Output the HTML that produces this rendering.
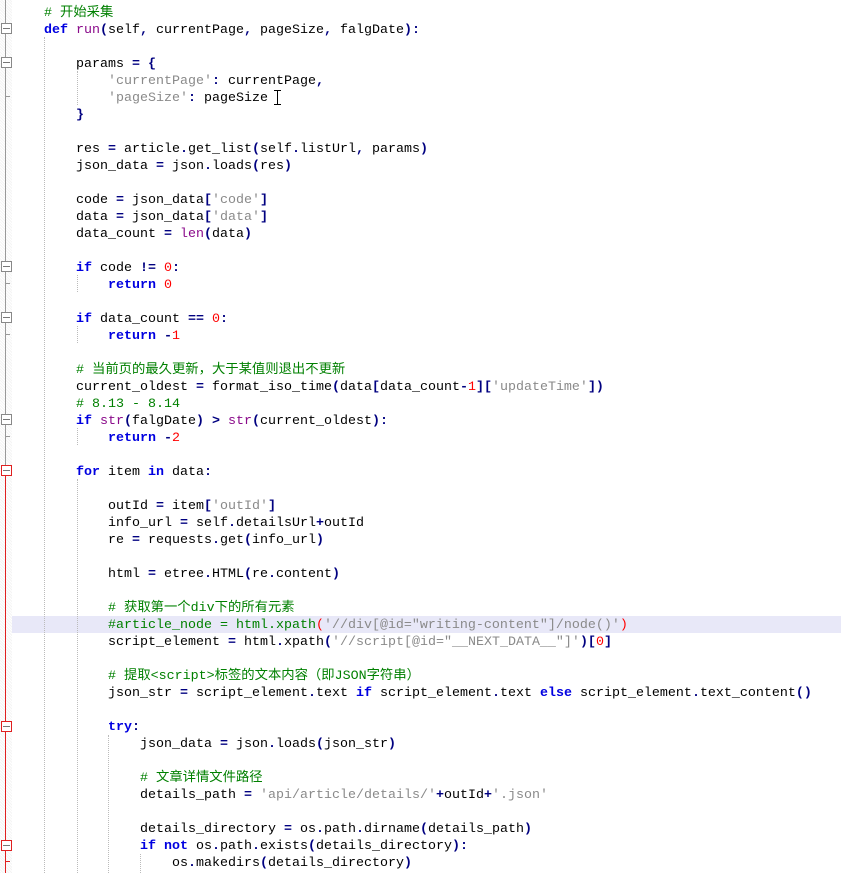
<!DOCTYPE html>
<html><head><meta charset="utf-8"><style>
html,body{margin:0;padding:0;background:#fff;width:841px;height:873px;overflow:hidden;position:relative}
.g{position:absolute;left:0;top:0;width:12px;height:873px;background:repeating-linear-gradient(45deg,#f4f4f4 0 1px,#fff 1px 2px)}
.vl{position:absolute;left:5px;width:1px;background:#999}
.vr{position:absolute;left:5px;width:1px;background:#e02020}
.bx{position:absolute;left:1px;width:9px;height:9px;border:1px solid #888;background:#fff}
.bx:after{content:"";position:absolute;left:1px;right:1px;top:4px;height:1px;background:#777}
.bx.r{border-color:#e02020}
.tk{position:absolute;left:5px;width:5px;height:1px;background:#999}
.tk.r{background:#e02020}
.dg{position:absolute;width:0;border-left:1px dotted #bbb}
.hl{position:absolute;left:12px;right:0;top:616px;height:17px;background:#e8e8f8}
.w{position:absolute;left:0;top:2px;width:841px;height:873px}
.l{position:absolute;left:0;height:17px;line-height:17px;white-space:pre;font-family:"Liberation Mono","Noto Sans CJK SC",monospace;font-size:13.33px;color:#000}
.k{color:#0000e0;font-weight:bold}
.f{color:#8a0a8a}
.n{color:#ff0000}
.s{color:#8a8a8a}
.c{color:#008000}
.o{color:#000080;font-weight:bold}
.cur{position:absolute;left:277px;top:90px;width:1px;height:15px;background:#000}
.cur:before,.cur:after{content:"";position:absolute;left:-3px;width:7px;height:1px;background:#000}
.cur:before{top:0}.cur:after{bottom:0}
</style></head><body>
<div class="g"></div>
<div class="hl"></div>
<div class="vl" style="top:0;height:470px"></div>
<div class="vr" style="top:470px;height:403px"></div>
<div class="bx" style="top:23px"></div>
<div class="bx" style="top:57px"></div>
<div class="tk" style="top:96px"></div>
<div class="bx" style="top:261px"></div>
<div class="tk" style="top:283px"></div>
<div class="bx" style="top:312px"></div>
<div class="tk" style="top:334px"></div>
<div class="bx" style="top:414px"></div>
<div class="tk" style="top:436px"></div>
<div class="bx r" style="top:465px"></div>
<div class="bx r" style="top:721px"></div>
<div class="bx r" style="top:840px"></div>
<div class="tk r" style="top:861px"></div>
<div class="dg" style="left:44px;top:37px;height:836px"></div>
<div class="dg" style="left:77px;top:71px;height:34px"></div>
<div class="dg" style="left:77px;top:275px;height:17px"></div>
<div class="dg" style="left:77px;top:326px;height:17px"></div>
<div class="dg" style="left:77px;top:428px;height:17px"></div>
<div class="dg" style="left:77px;top:479px;height:394px"></div>
<div class="dg" style="left:108px;top:735px;height:138px"></div>
<div class="dg" style="left:140px;top:854px;height:19px"></div>
<div class="w">
<div class="l" style="top:3px;left:44px"><span class="c"># 开始采集</span></div>
<div class="l" style="top:20px;left:44px"><span class="k">def</span> <span class="f">run</span><span class="o">(</span>self<span class="o">,</span> currentPage<span class="o">,</span> pageSize<span class="o">,</span> falgDate<span class="o">):</span></div>
<div class="l" style="top:54px;left:76px">params <span class="o">=</span> <span class="o">{</span></div>
<div class="l" style="top:71px;left:108px"><span class="s">'currentPage'</span><span class="o">:</span> currentPage<span class="o">,</span></div>
<div class="l" style="top:88px;left:108px"><span class="s">'pageSize'</span><span class="o">:</span> pageSize</div>
<div class="l" style="top:105px;left:76px"><span class="o">}</span></div>
<div class="l" style="top:139px;left:76px">res <span class="o">=</span> article<span class="o">.</span>get_list<span class="o">(</span>self<span class="o">.</span>listUrl<span class="o">,</span> params<span class="o">)</span></div>
<div class="l" style="top:156px;left:76px">json_data <span class="o">=</span> json<span class="o">.</span>loads<span class="o">(</span>res<span class="o">)</span></div>
<div class="l" style="top:190px;left:76px">code <span class="o">=</span> json_data<span class="o">[</span><span class="s">'code'</span><span class="o">]</span></div>
<div class="l" style="top:207px;left:76px">data <span class="o">=</span> json_data<span class="o">[</span><span class="s">'data'</span><span class="o">]</span></div>
<div class="l" style="top:224px;left:76px">data_count <span class="o">=</span> <span class="f">len</span><span class="o">(</span>data<span class="o">)</span></div>
<div class="l" style="top:258px;left:76px"><span class="k">if</span> code <span class="o">!=</span> <span class="n">0</span><span class="o">:</span></div>
<div class="l" style="top:275px;left:108px"><span class="k">return</span> <span class="n">0</span></div>
<div class="l" style="top:309px;left:76px"><span class="k">if</span> data_count <span class="o">==</span> <span class="n">0</span><span class="o">:</span></div>
<div class="l" style="top:326px;left:108px"><span class="k">return</span> <span class="o">-</span><span class="n">1</span></div>
<div class="l" style="top:360px;left:76px"><span class="c"># 当前页的最久更新，大于某值则退出不更新</span></div>
<div class="l" style="top:377px;left:76px">current_oldest <span class="o">=</span> format_iso_time<span class="o">(</span>data<span class="o">[</span>data_count<span class="o">-</span><span class="n">1</span><span class="o">][</span><span class="s">'updateTime'</span><span class="o">])</span></div>
<div class="l" style="top:394px;left:76px"><span class="c"># 8.13 - 8.14</span></div>
<div class="l" style="top:411px;left:76px"><span class="k">if</span> <span class="f">str</span><span class="o">(</span>falgDate<span class="o">)</span> <span class="o">&gt;</span> <span class="f">str</span><span class="o">(</span>current_oldest<span class="o">):</span></div>
<div class="l" style="top:428px;left:108px"><span class="k">return</span> <span class="o">-</span><span class="n">2</span></div>
<div class="l" style="top:462px;left:76px"><span class="k">for</span> item <span class="k">in</span> data<span class="o">:</span></div>
<div class="l" style="top:496px;left:108px">outId <span class="o">=</span> item<span class="o">[</span><span class="s">'outId'</span><span class="o">]</span></div>
<div class="l" style="top:513px;left:108px">info_url <span class="o">=</span> self<span class="o">.</span>detailsUrl<span class="o">+</span>outId</div>
<div class="l" style="top:530px;left:108px">re <span class="o">=</span> requests<span class="o">.</span>get<span class="o">(</span>info_url<span class="o">)</span></div>
<div class="l" style="top:564px;left:108px">html <span class="o">=</span> etree<span class="o">.</span>HTML<span class="o">(</span>re<span class="o">.</span>content<span class="o">)</span></div>
<div class="l" style="top:598px;left:108px"><span class="c"># 获取第一个div下的所有元素</span></div>
<div class="l" style="top:615px;left:108px"><span class="c">#article_node = html.xpath</span><span class="n">(</span><span class="s">'//div[@id="writing-content"]/node()'</span><span class="n">)</span></div>
<div class="l" style="top:632px;left:108px">script_element <span class="o">=</span> html<span class="o">.</span>xpath<span class="o">(</span><span class="s">'//script[@id="__NEXT_DATA__"]'</span><span class="o">)[</span><span class="n">0</span><span class="o">]</span></div>
<div class="l" style="top:666px;left:108px"><span class="c"># 提取&lt;script&gt;标签的文本内容（即JSON字符串）</span></div>
<div class="l" style="top:683px;left:108px">json_str <span class="o">=</span> script_element<span class="o">.</span>text <span class="k">if</span> script_element<span class="o">.</span>text <span class="k">else</span> script_element<span class="o">.</span>text_content<span class="o">()</span></div>
<div class="l" style="top:717px;left:108px"><span class="k">try</span><span class="o">:</span></div>
<div class="l" style="top:734px;left:140px">json_data <span class="o">=</span> json<span class="o">.</span>loads<span class="o">(</span>json_str<span class="o">)</span></div>
<div class="l" style="top:768px;left:140px"><span class="c"># 文章详情文件路径</span></div>
<div class="l" style="top:785px;left:140px">details_path <span class="o">=</span> <span class="s">'api/article/details/'</span><span class="o">+</span>outId<span class="o">+</span><span class="s">'.json'</span></div>
<div class="l" style="top:819px;left:140px">details_directory <span class="o">=</span> os<span class="o">.</span>path<span class="o">.</span>dirname<span class="o">(</span>details_path<span class="o">)</span></div>
<div class="l" style="top:836px;left:140px"><span class="k">if</span> <span class="k">not</span> os<span class="o">.</span>path<span class="o">.</span>exists<span class="o">(</span>details_directory<span class="o">):</span></div>
<div class="l" style="top:853px;left:172px">os<span class="o">.</span>makedirs<span class="o">(</span>details_directory<span class="o">)</span></div>
</div>
<div class="cur"></div>
</body></html>
